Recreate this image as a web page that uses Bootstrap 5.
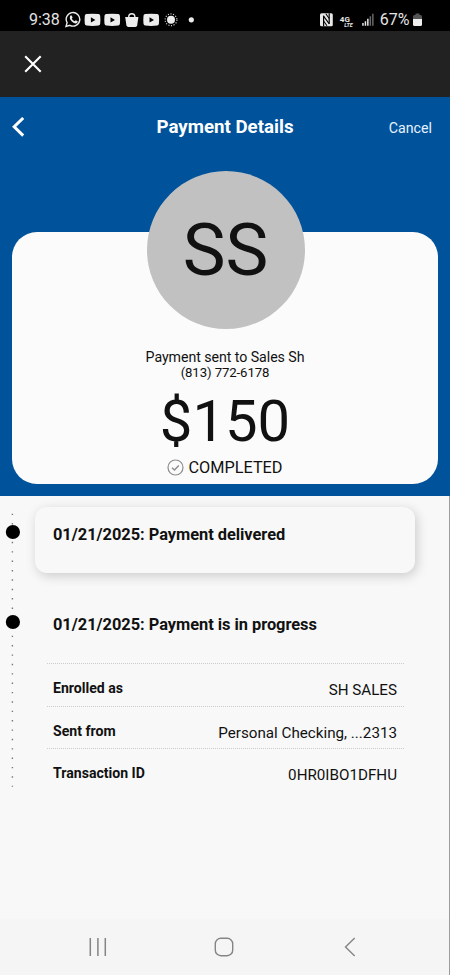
<!DOCTYPE html>
<html lang="en">
<head>
<meta charset="utf-8">
<meta name="viewport" content="width=device-width, initial-scale=1">
<title>Payment Details</title>
<link href="https://cdn.jsdelivr.net/npm/bootstrap@5.3.0/dist/css/bootstrap.min.css" rel="stylesheet">
<style>
  body { font-family: Roboto, "Liberation Sans", sans-serif; background: #f8f8f8; color: #111; width: 450px; height: 975px; }
  svg { display: block; flex: none; }
  .screen { height: 975px; border-right: 1px solid #9c9c9c; }
  .status { height: 31px; margin-right: -1px; padding: 8px 28.5px 0 29px; background: #000; color: #e4e4e4; font-size: 16px; line-height: 23px; }
  .status-time { width: 36px; }
  .battery { margin-left: 3px; }
  .toolbar { height: 66px; margin-right: -1px; padding: 0 0 1px 24px; background: #222; }
  .hero { height: 398.5px; margin-right: -1px; padding: 0 12px; background: #00529b; }
  .titlebar { height: 60px; display: grid; grid-template-columns: 80px 1fr 74px; padding-right: 6px; align-items: center; color: #fff; }
  .page-title { font-size: 18.7px; line-height: 24px; }
  .cancel { font-size: 14.2px; line-height: 20px; color: #e6f2ff; padding-top: 1px; }
  .summary { height: 252.5px; margin-top: 74.5px; border-radius: 25px; background: #fbfbfb; }
  .avatar { width: 158px; height: 158px; margin-top: -61px; margin-left: 1px; background: #c1c1c1; font-size: 72px; line-height: 159px; }
  .sent-to { font-size: 14.2px; letter-spacing: -.06px; line-height: 18px; margin-top: 19.5px; }
  .phone { font-size: 13.2px; letter-spacing: -.1px; line-height: 14px; }
  .amount { font-size: 58px; line-height: 60px; margin-top: 11px; }
  .state { font-size: 16.3px; line-height: 20px; margin-top: 6.5px; gap: 4px; }
  .history { height: 423px; }
  .rail { width: 35px; }
  .rail-line { width: 26px; }
  .events { width: 380px; padding-top: 11.5px; }
  .event { height: 66px; padding: 18px 18px; border-radius: 12px; font-size: 16.4px; letter-spacing: -.03px; line-height: 20px; }
  .event-current { background: #f8f8f8; box-shadow: 2px 3px 12px rgba(0,0,0,.18); }
  .event-next { margin-top: 24px; }
  .details { margin: 0 11px 0 12px; }
  .detail { height: 42.7px; padding: 15px 7px 0 6px; background: repeating-linear-gradient(90deg, #ccc 0 1px, transparent 1px 2px) top / 100% 1px no-repeat; }
  .detail-key { font-size: 14.1px; line-height: 21px; }
  .detail-value { font-size: 15.2px; line-height: 25.600px; }
  .sysnav { height: 56.5px; padding: 0 93px 0 88px; background: #f5f5f5; }
  .nav-home { margin-right: 5px; }
</style>
</head>
<body class="overflow-hidden">
<main class="screen">
  <div class="status d-flex justify-content-between">
    <div class="d-flex">
      <span class="status-time">9:38</span>
      <svg width="135" height="23" viewBox="65 8 135 23" fill="#ececec">
        <path d="M66 26.5l1.100-3.800a6.800 6.800 0 1 1 2.700 2.600z" fill="none" stroke="#ececec" stroke-width="1.400"/>
        <path d="M70.200 15.900q.9-1 1.600-.1l.8 1.800-.8 1.100q.9 1.800 2.900 2.600l1-1.100 2 1q.3 1.600-1.200 2.100-2 .6-4.700-1.900-2.900-2.900-1.600-5.500z"/>
        <path fill-rule="evenodd" d="M86.500 14q6-.7 12 0 1.500.2 1.700 1.800.4 4 0 8-.2 1.600-1.700 1.800-6 .6-12 0-1.500-.2-1.700-1.800-.4-4 0-8 .2-1.600 1.700-1.800zM90.900 17.300v5.200l4.500-2.600z"/>
        <path fill-rule="evenodd" d="M106.200 14q6-.7 12 0 1.500.2 1.700 1.800.4 4 0 8-.2 1.600-1.700 1.800-6 .6-12 0-1.500-.2-1.700-1.800-.4-4 0-8 .2-1.600 1.700-1.800zM110.500 17.300v5.200l4.500-2.600z"/>
        <path d="M125.200 17h13.200l-1.200 8.300q-.3 1.700-2 1.700h-6.800q-1.700 0-2-1.700z"/>
        <path d="M128.800 17.500v-1.500q.3-2.300 3-2.300t3 2.300v1.500" fill="none" stroke="#ececec" stroke-width="1.400"/>
        <path fill-rule="evenodd" d="M145.200 14q6-.7 12 0 1.500.2 1.700 1.800.4 4 0 8-.2 1.600-1.700 1.800-6 .6-12 0-1.500-.2-1.700-1.800-.4-4 0-8 .2-1.600 1.700-1.800zM149.500 17.300v5.200l4.500-2.600z"/>
        <circle cx="171" cy="19.800" r="4"/>
        <circle cx="171" cy="19.800" r="5.900" fill="none" stroke="#d8d8d8" stroke-width="1.100" stroke-dasharray="1.100 1.550"/>
        <circle cx="191.300" cy="19.800" r="2.600"/>
      </svg>
    </div>
    <div class="d-flex">
      <svg width="60" height="23" viewBox="319.500 8 60 23" fill="#e8e8e8">
        <rect x="319.500" y="13.300" width="12.800" height="13" rx="1.500"/>
        <path d="M323.100 26.300v-10.500M328.700 13.300v10.500" fill="none" stroke="#000" stroke-width="1.200"/>
        <path d="M322.900 15.800l5.900 8M325.300 13.800l3.400 4.700M323.100 21l3.400 4.700" fill="none" stroke="#000" stroke-width="1.100"/>
        <text x="339.300" y="21.500" font-size="8" font-weight="700">4G</text>
        <text x="343.800" y="27.400" font-size="5.400" font-weight="700" font-style="italic">LTE</text>
        <path d="M361.700 23h1.500v2.700h-1.500zM364.200 21.300h1.500v4.400h-1.500zM366.600 18.800h1.500v6.900h-1.500z"/>
        <path d="M369.100 16.200h1.500v9.500h-1.500zM371.600 13.800h1.500v11.900h-1.500z" fill="#666"/>
      </svg>
      <span>67%</span>
      <svg class="battery" width="9" height="23" viewBox="412 8 9 23">
        <path d="M412 16.500q0-1.500 1.500-1.500h1v-1.500h4v1.500h1q1.500 0 1.500 1.500v2.500h-9z" fill="#555"/>
        <path d="M412 19h9v5.500q0 1.500-1.500 1.500h-6q-1.500 0-1.500-1.500z" fill="#eee"/>
      </svg>
    </div>
  </div>
  <div class="toolbar d-flex align-items-center">
    <svg width="18" height="18" viewBox="0 0 18 18" fill="none" stroke="#fff" stroke-width="2.100"><path d="M1.200 1.200l15.500 15.500M16.700 1.200L1.200 16.700"/></svg>
  </div>
  <section class="hero">
    <header class="titlebar">
      <svg width="14" height="20" viewBox="0 0 14 20" fill="none" stroke="#fff" stroke-width="3"><path d="M11.200 1L2.200 9.800l9 8.800"/></svg>
      <h1 class="page-title fw-bold m-0 text-center">Payment Details</h1>
      <span class="cancel text-end">Cancel</span>
    </header>
    <div class="summary d-flex flex-column align-items-center">
      <div class="avatar rounded-circle text-center flex-shrink-0">SS</div>
      <div class="sent-to">Payment sent to Sales Sh</div>
      <div class="phone">(813) 772-6178</div>
      <div class="amount">$150</div>
      <div class="state d-flex align-items-center">
        <svg width="17" height="17" viewBox="0 0 17 17" fill="none" stroke="#8d8d8d"><circle cx="8.500" cy="8.500" r="7.500" stroke-width="1.200"/><path d="M5 8.700l2.500 2.300 4.300-4.500" stroke-width="1.500"/></svg>
        <span>COMPLETED</span>
      </div>
    </div>
  </section>
  <section class="history d-flex">
    <div class="rail">
      <svg class="rail-line" width="26" height="295" viewBox="0 0 26 295">
        <path d="M12.400 17.700v273" stroke="#777" stroke-width="1.400" stroke-dasharray="1.400 7.980"/>
        <circle cx="12.900" cy="36" r="7.100"/><circle cx="12.900" cy="126" r="7.100"/>
      </svg>
    </div>
    <div class="events">
      <div class="event event-current fw-bold">01/21/2025: Payment delivered</div>
      <div class="event event-next fw-bold">01/21/2025: Payment is in progress</div>
      <div class="details">
        <div class="detail d-flex justify-content-between"><span class="detail-key fw-bold">Enrolled as</span><span class="detail-value">SH SALES</span></div>
        <div class="detail d-flex justify-content-between"><span class="detail-key fw-bold">Sent from</span><span class="detail-value">Personal Checking, ...2313</span></div>
        <div class="detail d-flex justify-content-between"><span class="detail-key fw-bold">Transaction ID</span><span class="detail-value">0HR0IBO1DFHU</span></div>
      </div>
    </div>
  </section>
  <nav class="sysnav d-flex align-items-center justify-content-between">
    <svg width="20" height="20" viewBox="0 0 20 20" fill="none" stroke="#858585" stroke-width="1.500"><path d="M2.300 1v18M9.900 1v18M17.300 1v18"/></svg>
    <svg class="nav-home" width="20" height="20" viewBox="0 0 20 20" fill="none" stroke="#858585" stroke-width="1.400"><rect x="1.300" y="1.300" width="17.400" height="17.400" rx="5.500"/></svg>
    <svg width="12" height="20" viewBox="0 0 12 20" fill="none" stroke="#858585" stroke-width="1.400"><path d="M10.700 1L1.500 10l9.200 9"/></svg>
  </nav>
</main>
<script src="https://cdn.jsdelivr.net/npm/bootstrap@5.3.0/dist/js/bootstrap.bundle.min.js"></script>
</body>
</html>
